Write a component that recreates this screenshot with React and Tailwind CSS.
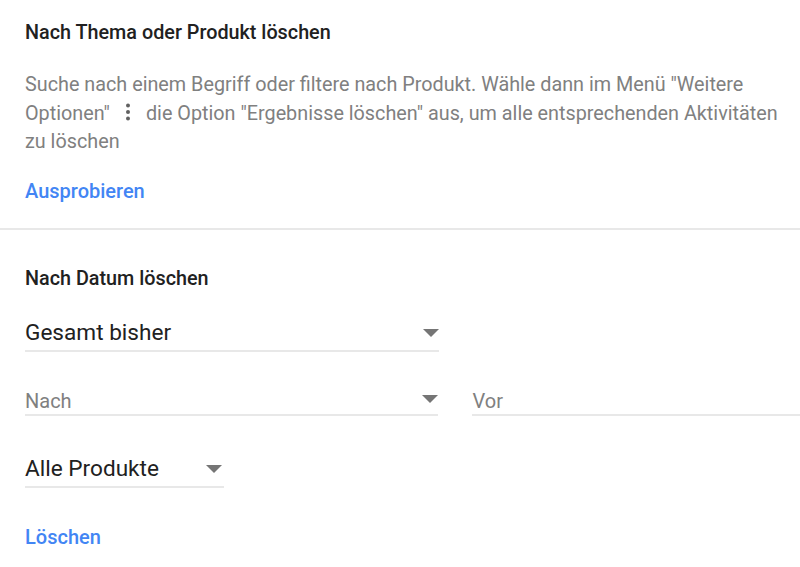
const font = "font-['Roboto',sans-serif]";

function Caret({ className }) {
  return (
    <svg width="16" height="8" viewBox="0 0 16 8" className={className}>
      <path d="M0 0h16L8 8z" fill="#757575" />
    </svg>
  );
}

function Select({ label, width, big, caret = true, caretClass = "", labelClass = "" }) {
  return (
    <div className={`flex items-center justify-between border-b-2 border-[#e8e8e8] ${width} ${big ? "h-[37px] text-[22.6px] text-[#212121]" : "h-[32px] text-[20px] text-[#808080]"}`}>
      <span className={labelClass}>{label}</span>
      {caret && <Caret className={caretClass} />}
    </div>
  );
}

export default function App() {
  return (
    <div className={`${font} w-[800px] h-[567px] overflow-hidden bg-white`}>
      <section className="px-[25px] pt-[21px] h-[230px] border-b-2 border-[#e8e8e8]">
        <h2 className="text-[19.8px] leading-[24px] font-medium text-[#212121]">Nach Thema oder Produkt löschen</h2>
        <p className="mt-[26px] text-[19.8px] leading-[28.5px] text-[#808080] w-[770px]">
          Suche nach einem Begriff oder filtere nach Produkt. Wähle dann im Menü "Weitere Optionen"
          <svg width="6" height="18" viewBox="0 0 6 18" className="inline-block mx-[15px] align-[-1px]">
            <circle cx="3" cy="2.5" r="2" fill="#616161" />
            <circle cx="3" cy="9" r="2" fill="#616161" />
            <circle cx="3" cy="15.5" r="2" fill="#616161" />
          </svg>
          die Option "Ergebnisse löschen" aus, um alle entsprechenden Aktivitäten zu löschen
        </p>
        <a className="block mt-[22px] text-[20px] leading-[24px] font-medium text-[#4285f4]">Ausprobieren</a>
      </section>
      <section className="pl-[25px] pt-[37px]">
        <h2 className="text-[19.8px] leading-[24px] font-medium text-[#212121]">Nach Datum löschen</h2>
        <div className="mt-[24px]"><Select label="Gesamt bisher" width="w-[414px]" big /></div>
        <div className="mt-[32px] flex gap-[34px]">
          <Select label="Nach" width="w-[414px]" labelClass="pt-[3px]" />
          <Select label="Vor" width="w-[328px]" caret={false} labelClass="pt-[3px]" />
        </div>
        <div className="mt-[35px]"><Select label="Alle Produkte" width="w-[199px]" big caretClass="mr-[2px]" labelClass="pt-[1px]" /></div>
        <a className="block mt-[37px] text-[20px] leading-[24px] font-medium text-[#4285f4]">Löschen</a>
      </section>
    </div>
  );
}
